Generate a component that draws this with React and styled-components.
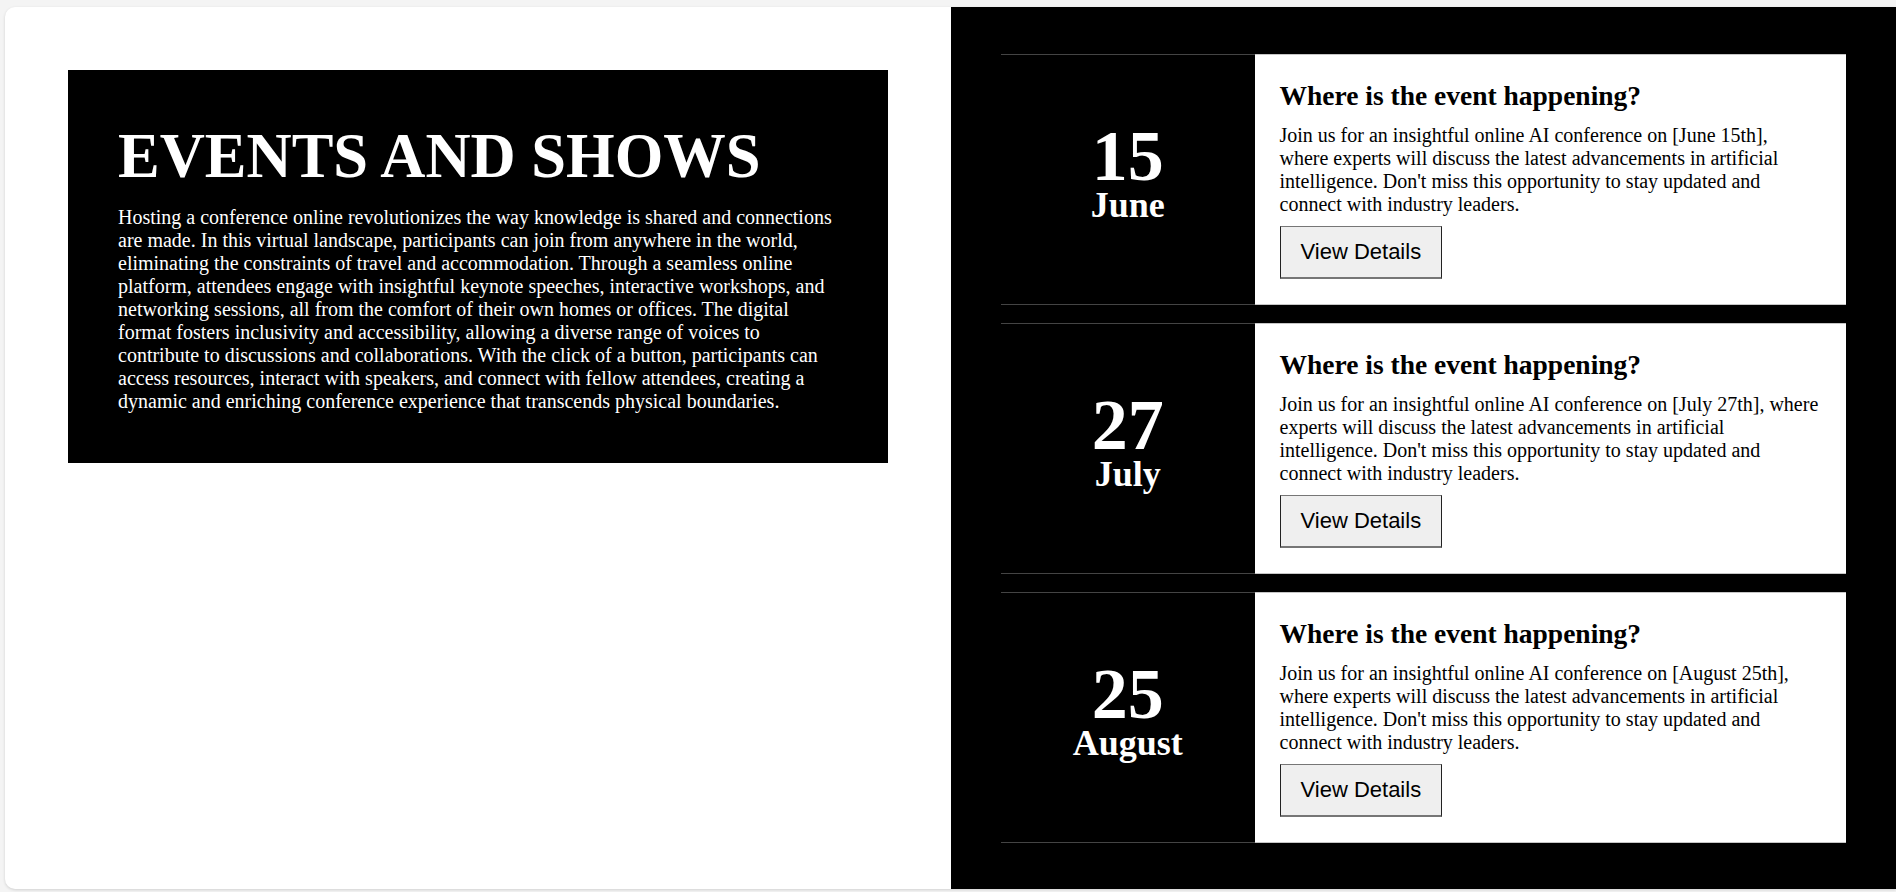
import styled, { createGlobalStyle } from "styled-components";

const GlobalStyle = createGlobalStyle`
  html, body {
    margin: 0;
    padding: 0;
    background: #f4f4f4;
    font-family: "Liberation Serif", "Times New Roman", serif;
    overflow: hidden;
  }
`;

const Card = styled.div`
  margin: 7px 0 3px 5px;
  height: 882px;
  display: grid;
  grid-template-columns: 946px 1fr;
  background: #fff;
  border-radius: 10px 0 0 10px;
  overflow: hidden;
  box-shadow: 0 1px 3px rgba(0, 0, 0, 0.15);
`;

const Intro = styled.section`
  padding: 63px;
`;

const IntroBox = styled.div`
  background: #000;
  color: #fff;
  padding: 50px;
`;

const Title = styled.h1`
  margin: 0 0 13px;
  font-size: 62.5px;
  font-weight: bold;
  line-height: normal;
`;

const IntroText = styled.p`
  margin: 0;
  font-size: 20px;
  line-height: normal;
`;

const EventList = styled.section`
  background: #000;
  padding: 47px 50px;
  display: flex;
  flex-direction: column;
  gap: 18px;
`;

const Row = styled.div`
  display: grid;
  grid-template-columns: 3fr 7fr;
  flex-shrink: 0;
`;

const DateCol = styled.div`
  display: flex;
  flex-direction: column;
  align-items: center;
  justify-content: center;
  padding-bottom: 12px;
  color: #fff;
  border-top: 1px solid #444;
  border-bottom: 1px solid #444;
`;

const Day = styled.div`
  font-size: 72px;
  font-weight: bold;
  line-height: 62px;
`;

const Month = styled.div`
  font-size: 36px;
  font-weight: bold;
  line-height: 36px;
`;

const Info = styled.div`
  background: #fff;
  padding: 25px;
  border-top: 1px solid #c6c6c6;
  border-bottom: 1px solid #c6c6c6;
`;

const InfoTitle = styled.h2`
  margin: 0 0 12px;
  font-size: 27.5px;
  font-weight: bold;
  line-height: normal;
`;

const InfoText = styled.p`
  margin: 0 0 10px;
  font-size: 20px;
  line-height: normal;
`;

const DetailsButton = styled.button`
  font-family: "Liberation Sans", Arial, sans-serif;
  font-size: 22px;
  line-height: normal;
  color: #000;
  background: #efefef;
  padding: 12px 20px;
  border: 1px solid #222;
  border-top-color: #767676;
  border-bottom: 2px solid #767676;
  border-radius: 0;
  cursor: pointer;
`;

const events = [
  { day: "15", month: "June", date: "June 15th" },
  { day: "27", month: "July", date: "July 27th" },
  { day: "25", month: "August", date: "August 25th" },
];

const App = () => {
  return (
    <>
      <GlobalStyle />
      <Card>
        <Intro>
          <IntroBox>
            <Title>EVENTS AND SHOWS</Title>
            <IntroText>
              Hosting a conference online revolutionizes the way knowledge is
              shared and connections are made. In this virtual landscape,
              participants can join from anywhere in the world, eliminating the
              constraints of travel and accommodation. Through a seamless online
              platform, attendees engage with insightful keynote speeches,
              interactive workshops, and networking sessions, all from the
              comfort of their own homes or offices. The digital format fosters
              inclusivity and accessibility, allowing a diverse range of voices
              to contribute to discussions and collaborations. With the click of
              a button, participants can access resources, interact with
              speakers, and connect with fellow attendees, creating a dynamic
              and enriching conference experience that transcends physical
              boundaries.
            </IntroText>
          </IntroBox>
        </Intro>
        <EventList>
          {events.map((ev) => (
            <Row key={ev.day}>
              <DateCol>
                <Day>{ev.day}</Day>
                <Month>{ev.month}</Month>
              </DateCol>
              <Info>
                <InfoTitle>Where is the event happening?</InfoTitle>
                <InfoText>
                  {`Join us for an insightful online AI conference on [${ev.date}], where experts will discuss the latest advancements in artificial intelligence. Don't miss this opportunity to stay updated and connect with industry leaders.`}
                </InfoText>
                <DetailsButton>View Details</DetailsButton>
              </Info>
            </Row>
          ))}
        </EventList>
      </Card>
    </>
  );
};

export default App;
